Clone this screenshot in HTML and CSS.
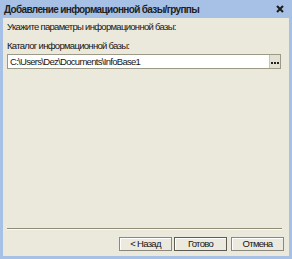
FILE: index.html
```html
<!DOCTYPE html>
<html lang="ru">
<head>
  <meta charset="UTF-8">
  <title>Добавление информационной базы/группы</title>
  <link rel="stylesheet" href="styles.css">
</head>
<body>

  <div class="window">
    <!-- Title -->
    <div class="titlebar">
      <span class="title">Добавление информационной базы/группы</span>
      <svg class="close" width="8" height="8" viewBox="0 0 8 8">
        <path d="M1 1 L7 7 M7 1 L1 7" stroke="#1c1c1c" stroke-width="2"/>
      </svg>
    </div>

    <!-- Client area -->
    <div class="client">
      <div class="hint">Укажите параметры информационной базы:</div>

      <div class="field-label">Каталог информационной базы:</div>
      <div class="path-field">
        <div class="path-input">C:\Users\Dez\Documents\InfoBase1</div>
        <div class="browse-btn">
          <svg width="8" height="2" viewBox="0 0 8 2">
            <rect x="0" y="0" width="2" height="2" fill="#222"/>
            <rect x="3" y="0" width="2" height="2" fill="#222"/>
            <rect x="6" y="0" width="2" height="2" fill="#222"/>
          </svg>
        </div>
      </div>

      <div class="separator"></div>

      <div class="buttons">
        <div class="btn">&lt; Назад</div>
        <div class="btn btn-default">Готово</div>
        <div class="btn btn-cancel">Отмена</div>
      </div>
    </div>
  </div>

</body>
</html>
```

FILE: styles.css
```css
* {
  box-sizing: border-box;
}

body {
  margin: 0;
  font-family: 'Liberation Sans', Arial, sans-serif;
  font-size: 9.5px;
  letter-spacing: -0.7px;
  color: #161616;
  background: #fff;
}

.window {
  width: 292px;
  height: 259px;
  display: flex;
  flex-direction: column;
  background: #a7c0e5;
  padding: 0 3px 3px;
}

.titlebar {
  height: 18px;
  display: flex;
  align-items: center;
  justify-content: space-between;
  padding: 0 5px 0 1px;
}

.title {
  font-weight: bold;
  font-size: 10px;
  letter-spacing: -0.65px;
  color: #1e1e1e;
}

.client {
  flex: 1;
  display: flex;
  flex-direction: column;
  background: #ebe8dc;
  padding: 2px 4px 5px;
}

.hint {
  line-height: 13px;
}

.field-label {
  margin-top: 6px;
  line-height: 13px;
}

.path-field {
  display: flex;
  height: 15px;
  margin-top: 2px;
  margin-right: 4px;
  border: 1px solid #9c9a86;
  background: #fff;
}

.path-input {
  flex: 1;
  padding: 0 2px;
  line-height: 13px;
}

.browse-btn {
  width: 11px;
  display: flex;
  align-items: center;
  justify-content: center;
  padding-top: 2px;
  background: #e3e0d4;
  border-left: 1px solid #c8c5b8;
}

.separator {
  margin-top: auto;
  margin-right: 3px;
  height: 2px;
  border-top: 1px solid #8f8c7a;
  border-bottom: 1px solid #fbfaf6;
}

.buttons {
  display: flex;
  justify-content: flex-end;
  gap: 2px;
  margin-top: 7px;
  padding-right: 1px;
}

.btn {
  width: 53px;
  height: 14px;
  line-height: 12px;
  text-align: center;
  background: #ece9de;
  border: 1px solid #8a887c;
  box-shadow: inset 1px 1px 0 #fff;
}

.btn-default {
  border-color: #5e5c52;
}

.btn-cancel {
  margin-left: 2px;
}
```
